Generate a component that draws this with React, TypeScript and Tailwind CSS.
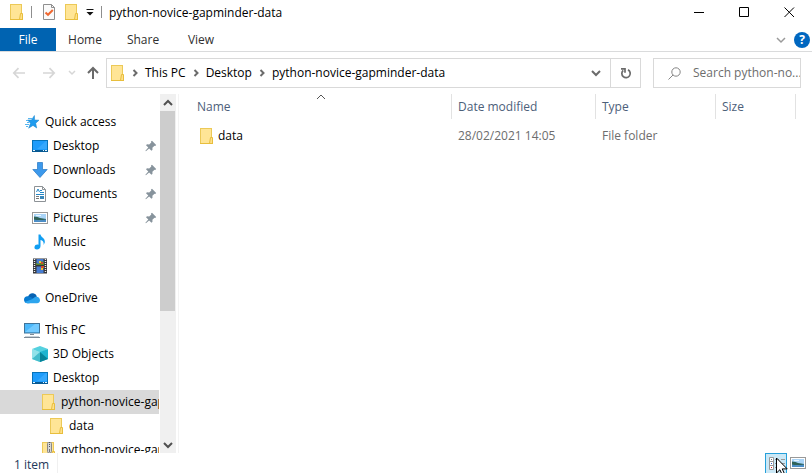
import React from "react";

type IconProps = { className?: string };

const Folder = ({ className = "" }: IconProps) => (
  <svg className={`h-4 w-3.5 shrink-0 ${className}`} viewBox="0 0 14 16" aria-hidden="true">
    <rect x="0.5" y="0.5" width="11" height="15" fill="#ffe596" stroke="#ecc957" />
    <path d="M10.5 9.5h2v6h-3z" fill="#ffe08a" stroke="#e8be3c" />
    <path d="M0 15.5h13" stroke="#e8be3c" />
  </svg>
);

const ZipFolder = () => (
  <svg className="h-4 w-3.5 shrink-0" viewBox="0 0 14 16" aria-hidden="true">
    <rect x="0.5" y="0.5" width="11" height="15" fill="#ffe596" stroke="#ecc957" />
    <path d="M10.5 9.5h2v6h-3z" fill="#ffe08a" stroke="#e8be3c" />
    <rect x="5.5" y="0" width="4" height="11" rx="1.5" fill="#d5d5d5" stroke="#888" />
    <path d="M7.5 0v6" stroke="#555" strokeWidth="1" strokeDasharray="1 1" />
    <path d="M7.5 7v3" stroke="#777" />
  </svg>
);

const Star = () => (
  <svg className="h-4 w-4" viewBox="0 0 16 16" aria-hidden="true">
    <path d="M10.4 1.5L10.6 6l4.4.2-3.3 3 1 4.8-3.7-2.6-4.4 2.8 1.9-4.9L3.6 6l3.9-.1z" fill="#1f9bee" stroke="#1683cb" strokeWidth="0.5" />
    <path d="M4 4.5h4M2 6.5h2M3 8.5h2M1 10.5h4M2 12.5h2" stroke="#55b5f0" strokeWidth="1" />
  </svg>
);

const Desktop = () => (
  <svg className="h-4 w-4" viewBox="0 0 16 16" aria-hidden="true">
    <rect x="0.5" y="2.5" width="15" height="11" fill="#1e9cfb" stroke="#0673b9" />
    <path d="M5 11L14 3h1v8z" fill="#35a8fd" />
    <path d="M0 13h16" stroke="#075a94" strokeWidth="2" />
    <path d="M1 12.5h2M11 12.5h1M13 12.5h2" stroke="#e5f6ff" />
  </svg>
);

const Download = () => (
  <svg className="h-4 w-4" viewBox="0 0 16 16" aria-hidden="true">
    <path d="M5.5.5h5v7h4.7L8 15.5.8 7.5h4.7z" fill="#3c99ec" stroke="#2577c3" strokeWidth="0.7" />
  </svg>
);

const Document = () => (
  <svg className="h-4 w-4" viewBox="0 0 16 16" aria-hidden="true">
    <path d="M2.5.5h8l3 3v12h-11z" fill="#fff" stroke="#8d9296" />
    <path d="M10.5.5v3h3" fill="none" stroke="#8d9296" />
    <path d="M4.5 6l1.5-3 1.5 3M8 4.5h2M8 6.5h4M4 8.5h8" fill="none" stroke="#2487c7" />
    <path d="M4 10.5h3M4 12.5h3" stroke="#777" />
    <path d="M8 10h4v3H8z" fill="#3a87b9" />
  </svg>
);

const Picture = () => (
  <svg className="h-4 w-4" viewBox="0 0 16 16" aria-hidden="true">
    <rect x="0.5" y="2.5" width="15" height="11" fill="#fff" stroke="#999" />
    <path d="M2 4h12v5H2z" fill="#a9d4f7" />
    <path d="M4 5.5h5" stroke="#e7f5ff" />
    <path d="M2 6.5q4 0 6 1.5l6 1v1.5H2z" fill="#2f6258" />
    <path d="M2 9.5q5 1.5 12 0V12H2z" fill="#4b8dc6" />
  </svg>
);

const Music = () => (
  <svg className="h-4 w-4" viewBox="0 0 16 16" aria-hidden="true">
    <path d="M6.5.5h2C9 3.5 13.5 4 12.8 8.5L11.6 11c.5-3-.8-4.5-3.1-5v6c0 2-1.5 3.5-3.5 3.5S2.2 14.3 2.5 13c.3-2 2-2.8 4-2.3z" fill="#119ef2" />
  </svg>
);

const Video = () => (
  <svg className="h-4 w-4" viewBox="0 0 16 16" aria-hidden="true">
    <rect x="1" y="0.5" width="14" height="15" fill="#35363a" />
    <path d="M2.5 1v14M13.5 1v14" stroke="#eee" strokeDasharray="1 1" strokeWidth="1.4" />
    <path d="M4.5 1h7v6h-7zM4.5 8.5h7v6.5h-7z" fill="#477dd2" />
    <path d="M4 5l3 1 3-3 2 2v2H4z" fill="#5c8a24" />
    <path d="M7 3h2v2H7zM9 10h2v2H9z" fill="#efc52f" />
    <path d="M9 4h2v2H9zM9 8h3v2H9z" fill="#d14a2b" />
  </svg>
);

const Cloud = () => (
  <svg className="h-4 w-4" viewBox="0 0 16 16" aria-hidden="true">
    <path d="M4 7C4.5 4 7 2.8 9.2 3.2 11 3.5 12.3 4.8 12.8 6.5L10 10z" fill="#0762b2" />
    <path d="M3.5 13.3C1.3 13.3 0 11.7 0 9.8c0-2 1.4-3.4 3.4-3.5 1.5-.1 2.8.5 4 1.3l3 2-5 3.7z" fill="#087bd1" />
    <path d="M8 9.2l3-2.3c2.7-1 5 .9 5 3.4 0 1.8-1.3 3-3 3H3.5c-1.4 0-2.3-.5-2.8-1.2z" fill="#2da5ee" />
  </svg>
);

const Computer = () => (
  <svg className="h-4 w-4" viewBox="0 0 16 16" aria-hidden="true">
    <rect x="0.5" y="1.5" width="15" height="9.5" fill="#4cb8fa" stroke="#407499" />
    <path d="M1 10L11 2h4v8z" fill="#72caff" />
    <path d="M6 12.5h4M0 15.5h16" stroke="#7d8a95" />
    <path d="M1 14.5h14" stroke="#c8d1d8" />
  </svg>
);

const Cube = () => (
  <svg className="h-4 w-4" viewBox="0 0 16 16" aria-hidden="true">
    <path d="M0 3l8-3 8 3-8 4z" fill="#55d1df" />
    <path d="M0 3l8 3v10l-8-3z" fill="#91e2e9" />
    <path d="M0 13l8-7v10z" fill="#44bdcc" />
    <path d="M8 6l8-3v10l-8 3z" fill="#1fb4cf" />
    <path d="M8 6l8 7-8 3z" fill="#078398" />
  </svg>
);

const Pin = () => (
  <svg className="h-3 w-3 shrink-0" viewBox="0 0 12 12" aria-hidden="true">
    <path d="M7 .8L11.2 5l-1 1-.7-.3-2.1 2.1.1 2-1 1-2.4-2.4L.9 11.3l-.5-.5 2.9-3.2L1 5.3l1-1 2.2.2 2.1-2.1L6 1.6z" fill="#87939c" />
  </svg>
);

const Chevron = ({ dir, className = "", weight = 2 }: { dir: "up" | "down" | "right"; className?: string; weight?: number }) => {
  const d = dir === "up" ? "M1 7l4-4 4 4" : dir === "down" ? "M1 3l4 4 4-4" : "M3.5 2l3 3-3 3";
  return (
    <svg className={`h-2.5 w-2.5 shrink-0 ${className}`} viewBox="0 0 10 10" fill="none" stroke="currentColor" strokeWidth={weight} aria-hidden="true">
      <path d={d} />
    </svg>
  );
};

const Arrow = ({ dir }: { dir: "left" | "right" | "up" }) => (
  <svg className="h-3.5 w-3.5" viewBox="0 0 14 14" fill="none" stroke="currentColor" strokeWidth={dir === "up" ? 2 : 1.7} aria-hidden="true">
    <path d={dir === "left" ? "M13 7H2M6.5 2.2L1.8 7l4.7 4.8" : dir === "right" ? "M1 7h11M7.5 2.2L12.2 7l-4.7 4.8" : "M7 13V2M2 7l5-5 5 5"} />
  </svg>
);

type Item = { label: string; icon: React.ReactNode; level: number; pinned?: boolean; selected?: boolean };

const groups: Item[][] = [
  [
    { label: "Quick access", icon: <Star />, level: 0 },
    { label: "Desktop", icon: <Desktop />, level: 1, pinned: true },
    { label: "Downloads", icon: <Download />, level: 1, pinned: true },
    { label: "Documents", icon: <Document />, level: 1, pinned: true },
    { label: "Pictures", icon: <Picture />, level: 1, pinned: true },
    { label: "Music", icon: <Music />, level: 1 },
    { label: "Videos", icon: <Video />, level: 1 },
  ],
  [{ label: "OneDrive", icon: <Cloud />, level: 0 }],
  [
    { label: "This PC", icon: <Computer />, level: 0 },
    { label: "3D Objects", icon: <Cube />, level: 1 },
    { label: "Desktop", icon: <Desktop />, level: 1 },
    { label: "python-novice-gapminder-data", icon: <Folder />, level: 2, selected: true },
    { label: "data", icon: <Folder />, level: 3 },
    { label: "python-novice-gapminder-data.zip", icon: <ZipFolder />, level: 2 },
  ],
];

const indents = ["pl-6", "pl-8", "pl-10", "pl-12"];

const TreeItem = ({ item }: { item: Item }) => (
  <li>
    <a href="#" className={`flex h-6 items-center gap-[5px] ${indents[item.level]} ${item.pinned ? "pr-0.5" : ""} ${item.selected ? "bg-[#d9d9d9]" : ""}`}>
      <span className="flex w-4 shrink-0 justify-end">{item.icon}</span>
      <span className="flex-1 overflow-hidden whitespace-nowrap">{item.label}</span>
      {item.pinned && <Pin />}
    </a>
  </li>
);

const TitleBar = () => (
  <header className="flex h-7 shrink-0 items-start">
    <div className="flex h-6 items-center pl-2.5">
      <Folder />
      <span className="ml-[7px] h-3 w-px bg-[#8e8e8e]" />
      <button aria-label="Properties" className="ml-[11px]">
        <svg className="h-4 w-3" viewBox="0 0 12 16" fill="none" aria-hidden="true">
          <path d="M.5.5h8l3 3v12H.5z" fill="#fafafa" stroke="#8f8f8f" />
          <path d="M8.5.5v3h3" stroke="#8f8f8f" />
          <path d="M2.5 8.5l2.5 2.3L9.8 6" stroke="#ef6830" strokeWidth="2" />
        </svg>
      </button>
      <button aria-label="New folder" className="ml-2.5"><Folder /></button>
      <button aria-label="Customize toolbar" className="ml-[7px]">
        <svg className="h-2 w-2" viewBox="0 0 8 8" aria-hidden="true"><path d="M.5 1h7v1h-7zM.5 4h7L4 7.5z" fill="#111" /></svg>
      </button>
      <span className="ml-[7px] h-3 w-px bg-[#8e8e8e]" />
    </div>
    <h1 className="ml-[7px] flex h-[26px] items-center">python-novice-gapminder-data</h1>
    <div className="ml-auto flex h-[25px]">
      {[["Minimize", "M0 5.5h10"], ["Maximize", "M.5.5h9v9h-9z"], ["Close", "M.5.5l9.5 9.5M10 .5L.5 10"]].map(([name, d]) => (
        <button key={name} aria-label={name} className="flex w-[45px] items-center justify-center">
          <svg className="h-[11px] w-[11px]" viewBox="0 0 11 11" fill="none" stroke="#000" aria-hidden="true"><path d={d} /></svg>
        </button>
      ))}
    </div>
  </header>
);

const Ribbon = () => (
  <nav className="flex h-6 shrink-0 items-stretch border-b border-[#dadbdc] text-[#303030]">
    <button className="w-14 bg-[#0063b1] text-white">File</button>
    {["Home", "Share", "View"].map((t) => (
      <button key={t} className="w-[58px]">{t}</button>
    ))}
    <button aria-label="Expand ribbon" className="ml-auto mr-2 text-[#9a9a9a]"><Chevron dir="down" weight={1.5} /></button>
    <button aria-label="Help" className="mr-0.5">
      <span className="flex h-4 w-4 items-center justify-center rounded-full bg-[#0067c0] font-bold text-white">?</span>
    </button>
  </nav>
);

const AddressBar = () => (
  <div className="flex h-[42px] shrink-0 items-center pr-[11px]">
    <div className="flex w-[106px] items-center pl-3 text-[#d6d6d6]">
      <button aria-label="Back"><Arrow dir="left" /></button>
      <button aria-label="Forward" className="ml-4"><Arrow dir="right" /></button>
      <button aria-label="Recent locations" className="ml-3"><svg className="h-2 w-2" viewBox="0 0 8 8" fill="none" stroke="currentColor" strokeWidth="1.5" aria-hidden="true"><path d="M1 2l3 3 3-3" /></svg></button>
      <button aria-label="Up" className="ml-2.5 text-[#6a6a6a]"><Arrow dir="up" /></button>
    </div>
    <div className="flex h-[30px] flex-1 border border-[#d9d9d9]">
      <nav aria-label="Location" className="flex flex-1 items-center pl-1">
        <Folder className="mr-1" />
        {["This PC", "Desktop", "python-novice-gapminder-data"].map((p) => (
          <React.Fragment key={p}>
            <Chevron dir="right" className="mx-px text-[#6b6b6b]" />
            <button className="px-1">{p}</button>
          </React.Fragment>
        ))}
      </nav>
      <button aria-label="Previous locations" className="flex w-7 items-center justify-center text-[#6b6b6b]"><Chevron dir="down" /></button>
      <button aria-label="Refresh" className="flex w-[30px] items-center justify-center border-l border-[#d9d9d9]">
        <svg className="h-3 w-3" viewBox="0 0 12 12" fill="none" stroke="#6b6b6b" strokeWidth="1.7" aria-hidden="true">
          <path d="M8 2.8A4.2 4.2 0 1 1 3.2 3.4M1 1.8h4v4" />
        </svg>
      </button>
    </div>
    <label className="ml-3 flex h-[30px] w-[148px] items-center border border-[#d9d9d9] pl-3.5">
      <svg className="h-[13px] w-[13px] shrink-0" viewBox="0 0 13 13" fill="none" stroke="#858585" aria-hidden="true"><circle cx="8" cy="5" r="4.2" /><path d="M5 8L.5 12.5" /></svg>
      <input type="text" aria-label="Search this folder" placeholder="Search python-no..." className="ml-3 min-w-0 flex-1 outline-none placeholder:text-[#6d6d6d] placeholder:opacity-100" />
    </label>
  </div>
);

const Sidebar = () => (
  <aside className="flex w-[179px] shrink-0 border-r border-[#f3f3f3]">
    <nav aria-label="Folders" className="mr-px w-[159px] overflow-hidden pt-4">
      {groups.map((g, i) => (
        <ul key={i} className="mb-2">
          {g.map((item, j) => <TreeItem key={j} item={item} />)}
        </ul>
      ))}
    </nav>
    <div className="flex w-4 flex-col bg-[#f0f0f0] text-[#505050]">
      <button aria-label="Scroll up" className="flex h-[17px] shrink-0 items-center justify-center"><Chevron dir="up" /></button>
      <div className="min-h-0 flex-1"><div className="h-8/13 w-[15px] bg-[#cdcdcd]" /></div>
      <button aria-label="Scroll down" className="flex h-[17px] shrink-0 items-center justify-center"><Chevron dir="down" /></button>
    </div>
  </aside>
);

const columns: [string, string][] = [["Name", "w-[262px]"], ["Date modified", "w-36"], ["Type", "w-[120px]"], ["Size", "w-20"]];

const FileList = () => (
  <main className="min-w-0 flex-1 overflow-hidden pl-[11px]">
    <table className="w-[606px] table-fixed border-collapse text-left">
      <thead>
        <tr className="h-[25px]">
          {columns.map(([name, width]) => (
            <th key={name} aria-sort={name === "Name" ? "ascending" : undefined} className={`relative p-0 font-normal text-[#4c607a] ${width}`}>
              <button className={`flex h-[25px] w-full items-center border-r border-[#e2e2e2] ${name === "Name" ? "pl-[7px]" : "pl-1.5"}`}>{name}</button>
              {name === "Name" && <Chevron dir="up" weight={1} className="absolute -top-0.5 left-1/2 -translate-x-1/2 text-[#555]" />}
            </th>
          ))}
        </tr>
      </thead>
      <tbody>
        <tr className="h-[34px] text-[#6d6d6d]">
          <td className="p-0 pl-2.5 text-black"><a href="#" className="flex items-center gap-1"><Folder />data</a></td>
          <td className="p-0 pl-1.5">28/02/2021 14:05</td>
          <td className="p-0 pl-1.5">File folder</td>
          <td className="p-0" />
        </tr>
      </tbody>
    </table>
  </main>
);

const StatusBar = () => (
  <footer className="flex h-5 shrink-0 items-center pl-3.5 text-[#1e395b]">
    <span className="w-11 border-r border-[#f0f0f0] pt-1">1 item</span>
    <div className="ml-auto flex items-center pr-1.5">
      <button aria-label="Details view" className="relative flex h-5 w-[22px] items-center border border-b-0 border-[#26a0da] bg-[#cbe8f6] pl-[3px]">
        <svg className="h-[13px] w-4" viewBox="0 0 16 13" fill="none" aria-hidden="true">
          <path d="M.5.5h4v12h-4z" fill="#fff" stroke="#999" />
          <path d="M.5 4.5h4M.5 8.5h4M6 2.5h4M12 2.5h4M6 6.5h4M12 6.5h4M6 10.5h4M12 10.5h4" stroke="#999" />
          <path d="M2 2h1v1H2z" fill="#777" /><path d="M2 6h1v1H2z" fill="#36c" /><path d="M2 10h1v1H2z" fill="#d22" />
        </svg>
        <svg className="absolute left-2.5 top-[3px] h-[19px] w-3" viewBox="0 0 12 19" aria-hidden="true">
          <path d="M.5 1v15l3.4-3.3 2.6 5.8 2.3-1-2.6-5.6h5z" fill="#fff" stroke="#000" />
        </svg>
      </button>
      <button aria-label="Large icons view" className="ml-[3px]"><Picture /></button>
    </div>
  </footer>
);

export default function App() {
  return (
    <div className="flex h-screen flex-col overflow-hidden bg-white font-['Open_Sans','Noto_Sans',sans-serif] text-xs text-black">
      <TitleBar />
      <Ribbon />
      <AddressBar />
      <div className="flex min-h-0 flex-1">
        <Sidebar />
        <FileList />
      </div>
      <StatusBar />
    </div>
  );
}
